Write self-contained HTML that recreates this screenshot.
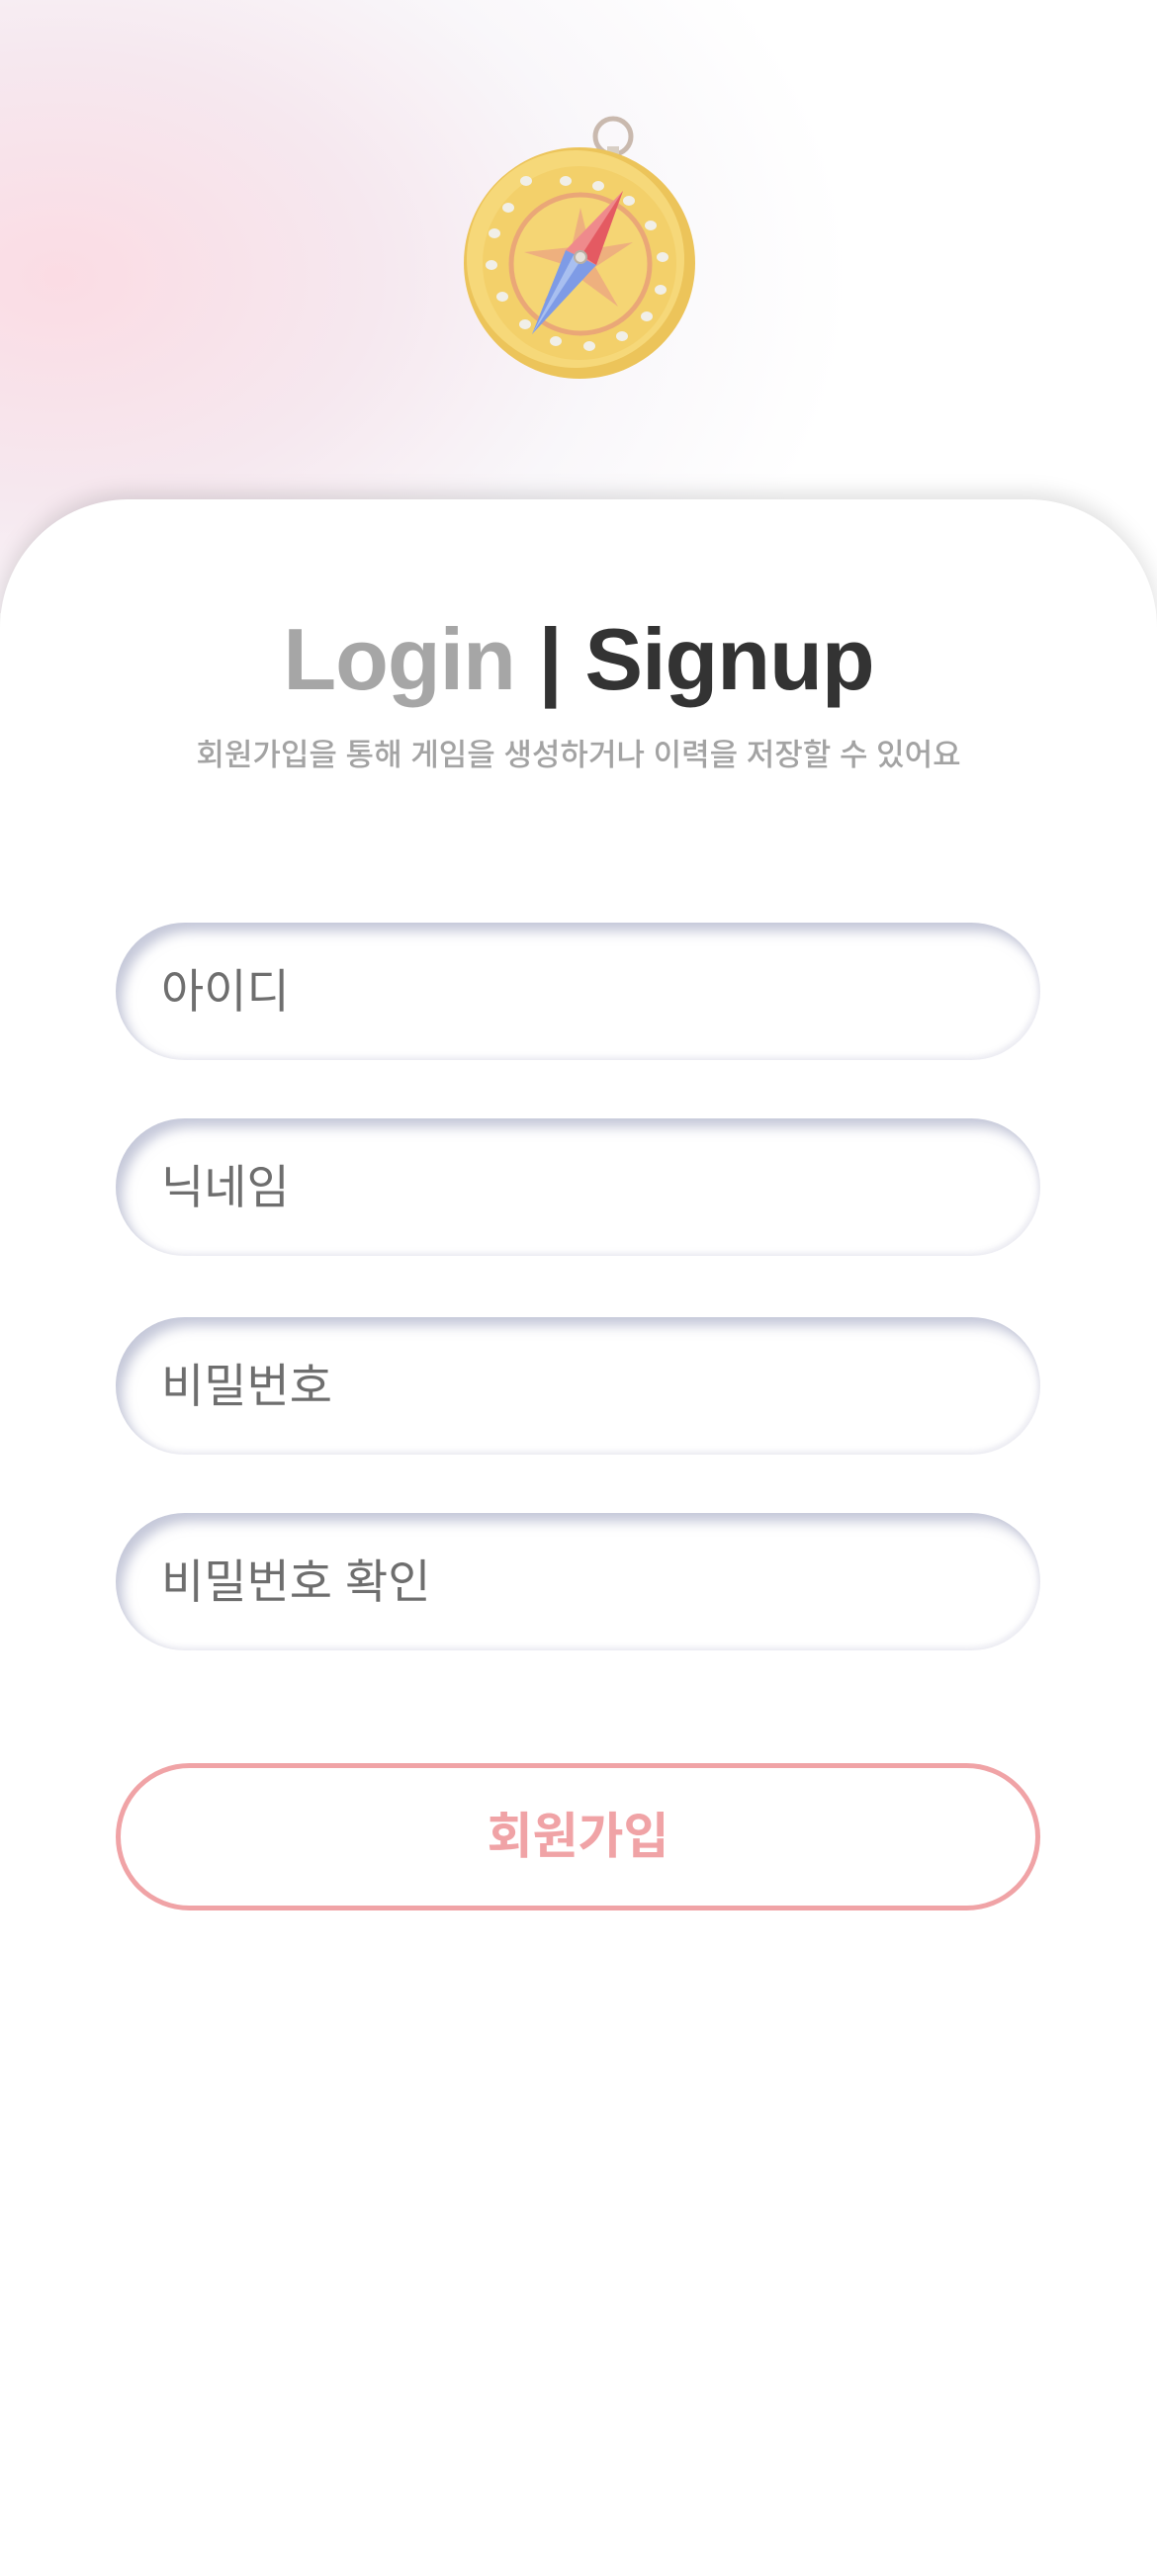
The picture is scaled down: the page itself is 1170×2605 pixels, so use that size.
<!DOCTYPE html>
<html><head><meta charset="utf-8"><style>
*{margin:0;padding:0;box-sizing:border-box}
body{width:1170px;height:2532px;overflow:hidden;background:#fff;font-family:"Liberation Sans","Noto Sans CJK KR",sans-serif;position:relative}
.bg{position:absolute;left:0;top:0;width:1170px;height:620px;background:radial-gradient(ellipse 800px 560px at 60px 280px,#fbdce4 0%,#f6e8ef 40%,#f9f7fa 70%,#fff 100%)}
.card{position:absolute;left:0;top:505px;width:1170px;height:2100px;background:#fff;border-radius:130px 130px 0 0;box-shadow:0 -6px 22px rgba(0,0,0,.13)}
.title{position:absolute;top:616px;width:1170px;text-align:center;font-size:88px;font-weight:bold;letter-spacing:-1px;color:#333}
.title .l{color:#a6a6a6}
.sub{position:absolute;top:738px;width:1170px;text-align:center;font-size:31px;font-weight:500;color:#a3a3a3}
.in{position:absolute;left:117px;width:935px;height:139px;border-radius:70px;background:#fff;box-shadow:inset 7px 9px 12px rgba(150,155,185,.55),inset -3px -3px 6px rgba(235,235,242,.9);font-size:47px;color:#6e6e6e;padding-left:46px;line-height:139px}
.btn{position:absolute;left:117px;top:1783px;width:935px;height:149px;border:5px solid #f0a3a6;border-radius:75px;text-align:center;line-height:139px;font-size:50px;font-weight:bold;color:#f0a3a6}
</style></head><body>
<div class="bg"></div>
<svg style="position:absolute;left:440px;top:100px" width="300" height="300" viewBox="440 100 300 300">
<circle cx="620" cy="138" r="18" fill="none" stroke="#c9b9ae" stroke-width="5"/>
<rect x="614" y="148" width="12" height="12" fill="#d8cfc5"/>
<circle cx="586" cy="266" r="117" fill="#ecc45a"/>
<circle cx="582" cy="262" r="110" fill="#f6d879"/>
<circle cx="586" cy="266" r="98" fill="#f3d06a"/>
<circle cx="587" cy="267" r="70" fill="#f5d574" stroke="#eaa777" stroke-width="5"/>
<polygon points="587,210 597,252 640,245 602,270 625,310 587,282 550,305 572,268 530,255 578,250" fill="#eeb07e"/>
<g fill="#f1efe8">
<ellipse cx="532" cy="183" rx="6" ry="5"/><ellipse cx="572" cy="183" rx="6" ry="5"/><ellipse cx="605" cy="188" rx="6" ry="5"/><ellipse cx="636" cy="203" rx="6" ry="5"/><ellipse cx="658" cy="228" rx="6" ry="5"/><ellipse cx="670" cy="260" rx="6" ry="5"/><ellipse cx="668" cy="293" rx="6" ry="5"/><ellipse cx="654" cy="320" rx="6" ry="5"/><ellipse cx="629" cy="340" rx="6" ry="5"/><ellipse cx="596" cy="350" rx="6" ry="5"/><ellipse cx="562" cy="345" rx="6" ry="5"/><ellipse cx="531" cy="328" rx="6" ry="5"/><ellipse cx="508" cy="300" rx="6" ry="5"/><ellipse cx="497" cy="268" rx="6" ry="5"/><ellipse cx="500" cy="236" rx="6" ry="5"/><ellipse cx="514" cy="210" rx="6" ry="5"/>
</g>
<polygon points="630,193 603,268 572,253" fill="#ef8a8c"/>
<polygon points="630,193 603,268 588,258" fill="#e45a62"/>
<polygon points="538,338 572,253 603,268" fill="#7e9be6"/>
<polygon points="538,338 580,258 588,262" fill="#a8bff0"/>
<circle cx="587" cy="260" r="6" fill="#e6e2da" stroke="#b9b0a4" stroke-width="2"/>
</svg>
<div class="card"></div>
<div class="title"><span class="l">Login</span> | Signup</div>
<div class="sub">회원가입을 통해 게임을 생성하거나 이력을 저장할 수 있어요</div>
<div class="in" style="top:933px">아이디</div>
<div class="in" style="top:1131px">닉네임</div>
<div class="in" style="top:1332px">비밀번호</div>
<div class="in" style="top:1530px">비밀번호 확인</div>
<div class="btn">회원가입</div>
</body></html>
